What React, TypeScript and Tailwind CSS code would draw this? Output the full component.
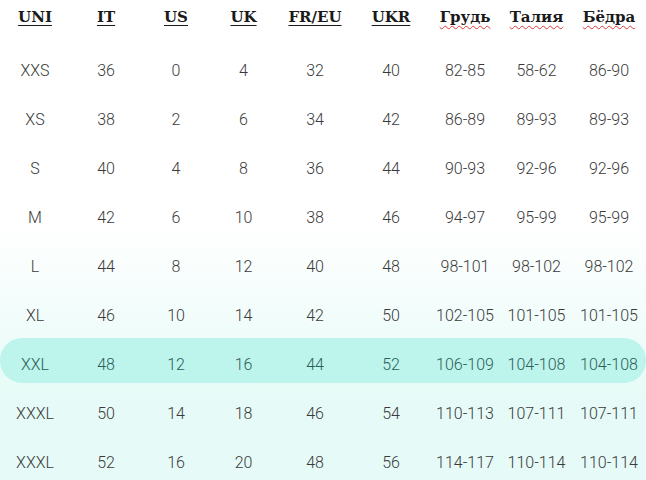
const headers = [
  { label: "UNI", spell: false },
  { label: "IT", spell: false },
  { label: "US", spell: false },
  { label: "UK", spell: false },
  { label: "FR/EU", spell: false },
  { label: "UKR", spell: false },
  { label: "Грудь", spell: true },
  { label: "Талия", spell: true },
  { label: "Бёдра", spell: true },
];

const rows = [
  ["XXS", "36", "0", "4", "32", "40", "82-85", "58-62", "86-90"],
  ["XS", "38", "2", "6", "34", "42", "86-89", "89-93", "89-93"],
  ["S", "40", "4", "8", "36", "44", "90-93", "92-96", "92-96"],
  ["M", "42", "6", "10", "38", "46", "94-97", "95-99", "95-99"],
  ["L", "44", "8", "12", "40", "48", "98-101", "98-102", "98-102"],
  ["XL", "46", "10", "14", "42", "50", "102-105", "101-105", "101-105"],
  ["XXL", "48", "12", "16", "44", "52", "106-109", "104-108", "104-108"],
  ["XXXL", "50", "14", "18", "46", "54", "110-113", "107-111", "107-111"],
  ["XXXL", "52", "16", "20", "48", "56", "114-117", "110-114", "110-114"],
];

const cols = "grid grid-cols-[70px_72px_68px_67px_76px_76px_72px_71px_74px]";

export default function App() {
  return (
    <div className="w-[646px] h-[480px] overflow-hidden bg-[linear-gradient(to_bottom,#ffffff_0px,#ffffff_225px,#e6fbf7_400px,#e6fbf7_480px)]">
      <div className={`${cols} h-[33px] items-center`}>
        {headers.map((h) => (
          <div key={h.label} className="text-center">
            <span
              className={
                h.spell
                  ? "font-['DejaVu_Serif',serif] font-bold text-[15px] text-[#1a1a1a] underline decoration-wavy decoration-[#e03a3a] decoration-1 underline-offset-[3px]"
                  : "font-['DejaVu_Serif',serif] font-bold text-[15px] text-[#1a1a1a] underline decoration-1 underline-offset-[3px]"
              }
            >
              {h.label}
            </span>
          </div>
        ))}
      </div>

      <div className="mt-[13.5px] flex flex-col">
        {rows.map((r, i) =>
          i === 6 ? (
            <div
              key={i}
              className={`${cols} h-[45px] pt-[9px] mt-[-2.5px] mb-[6.5px] items-center rounded-[22px] bg-[#bdf4ec] text-[#2d5e58]`}
            >
              {r.map((c, j) => (
                <div key={j} className="text-center font-['Roboto',sans-serif] font-light text-[16px]">
                  {c}
                </div>
              ))}
            </div>
          ) : (
            <div key={i} className={`${cols} h-[49px] items-center text-[#3a3a3a]`}>
              {r.map((c, j) => (
                <div key={j} className="text-center font-['Roboto',sans-serif] font-light text-[16px]">
                  {c}
                </div>
              ))}
            </div>
          )
        )}
      </div>
    </div>
  );
}
